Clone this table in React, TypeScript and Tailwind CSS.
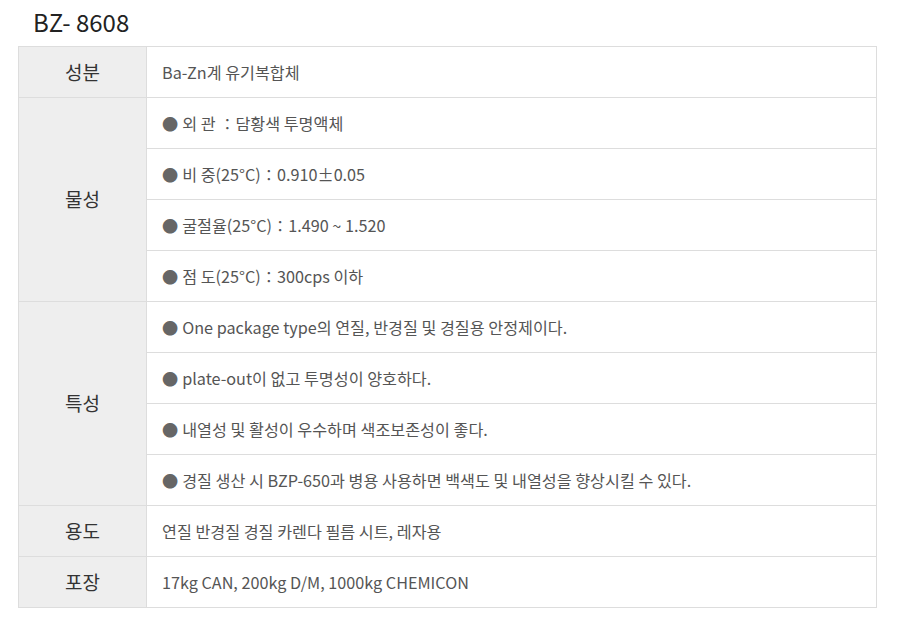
import React from 'react';

const FONT = { fontFamily: '"Noto Sans CJK KR", "Noto Sans", sans-serif' };

type Group = { label: string; items: string[]; bullet?: boolean };

const GROUPS: Group[] = [
  { label: '성분', items: ['Ba-Zn계 유기복합체'] },
  {
    label: '물성',
    bullet: true,
    items: [
      '외 관 ∶담황색 투명액체',
      '비 중(25°C)∶0.910±0.05',
      '굴절율(25°C)∶1.490 ~ 1.520',
      '점 도(25°C)∶300cps 이하',
    ],
  },
  {
    label: '특성',
    bullet: true,
    items: [
      'One package type의 연질, 반경질 및 경질용 안정제이다.',
      'plate-out이 없고 투명성이 양호하다.',
      '내열성 및 활성이 우수하며 색조보존성이 좋다.',
      '경질 생산 시 BZP-650과 병용 사용하면 백색도 및 내열성을 향상시킬 수 있다.',
    ],
  },
  { label: '용도', items: ['연질 반경질 경질 카렌다 필름 시트, 레자용'] },
  { label: '포장', items: ['17kg CAN, 200kg D/M, 1000kg CHEMICON'] },
];

export default function App() {
  return (
    <div className="w-[897px] h-[622px] bg-white" style={FONT}>
      <h1 className="pl-[33px] pt-[6px] h-[46px] text-[24px] leading-[32px] text-[#222] font-normal">BZ- 8608</h1>
      <table className="ml-[18px] w-[859px] border-collapse border border-[#dddddd]">
        <tbody>
          {GROUPS.map((g) =>
            g.items.map((item, i) => (
              <tr key={g.label + i}>
                {i === 0 && (
                  <th
                    rowSpan={g.items.length}
                    className="w-[128px] bg-[#eeeeee] border border-[#dddddd] text-[19px] font-normal text-[#333] text-center align-middle"
                  >
                    {g.label}
                  </th>
                )}
                <td className="h-[51px] border border-[#dddddd] pl-[15px] text-[16.2px] text-[#555] align-middle">
                  {g.bullet && <span className="text-[#666] mr-[4px]">●</span>}
                  {item}
                </td>
              </tr>
            ))
          )}
        </tbody>
      </table>
    </div>
  );
}
